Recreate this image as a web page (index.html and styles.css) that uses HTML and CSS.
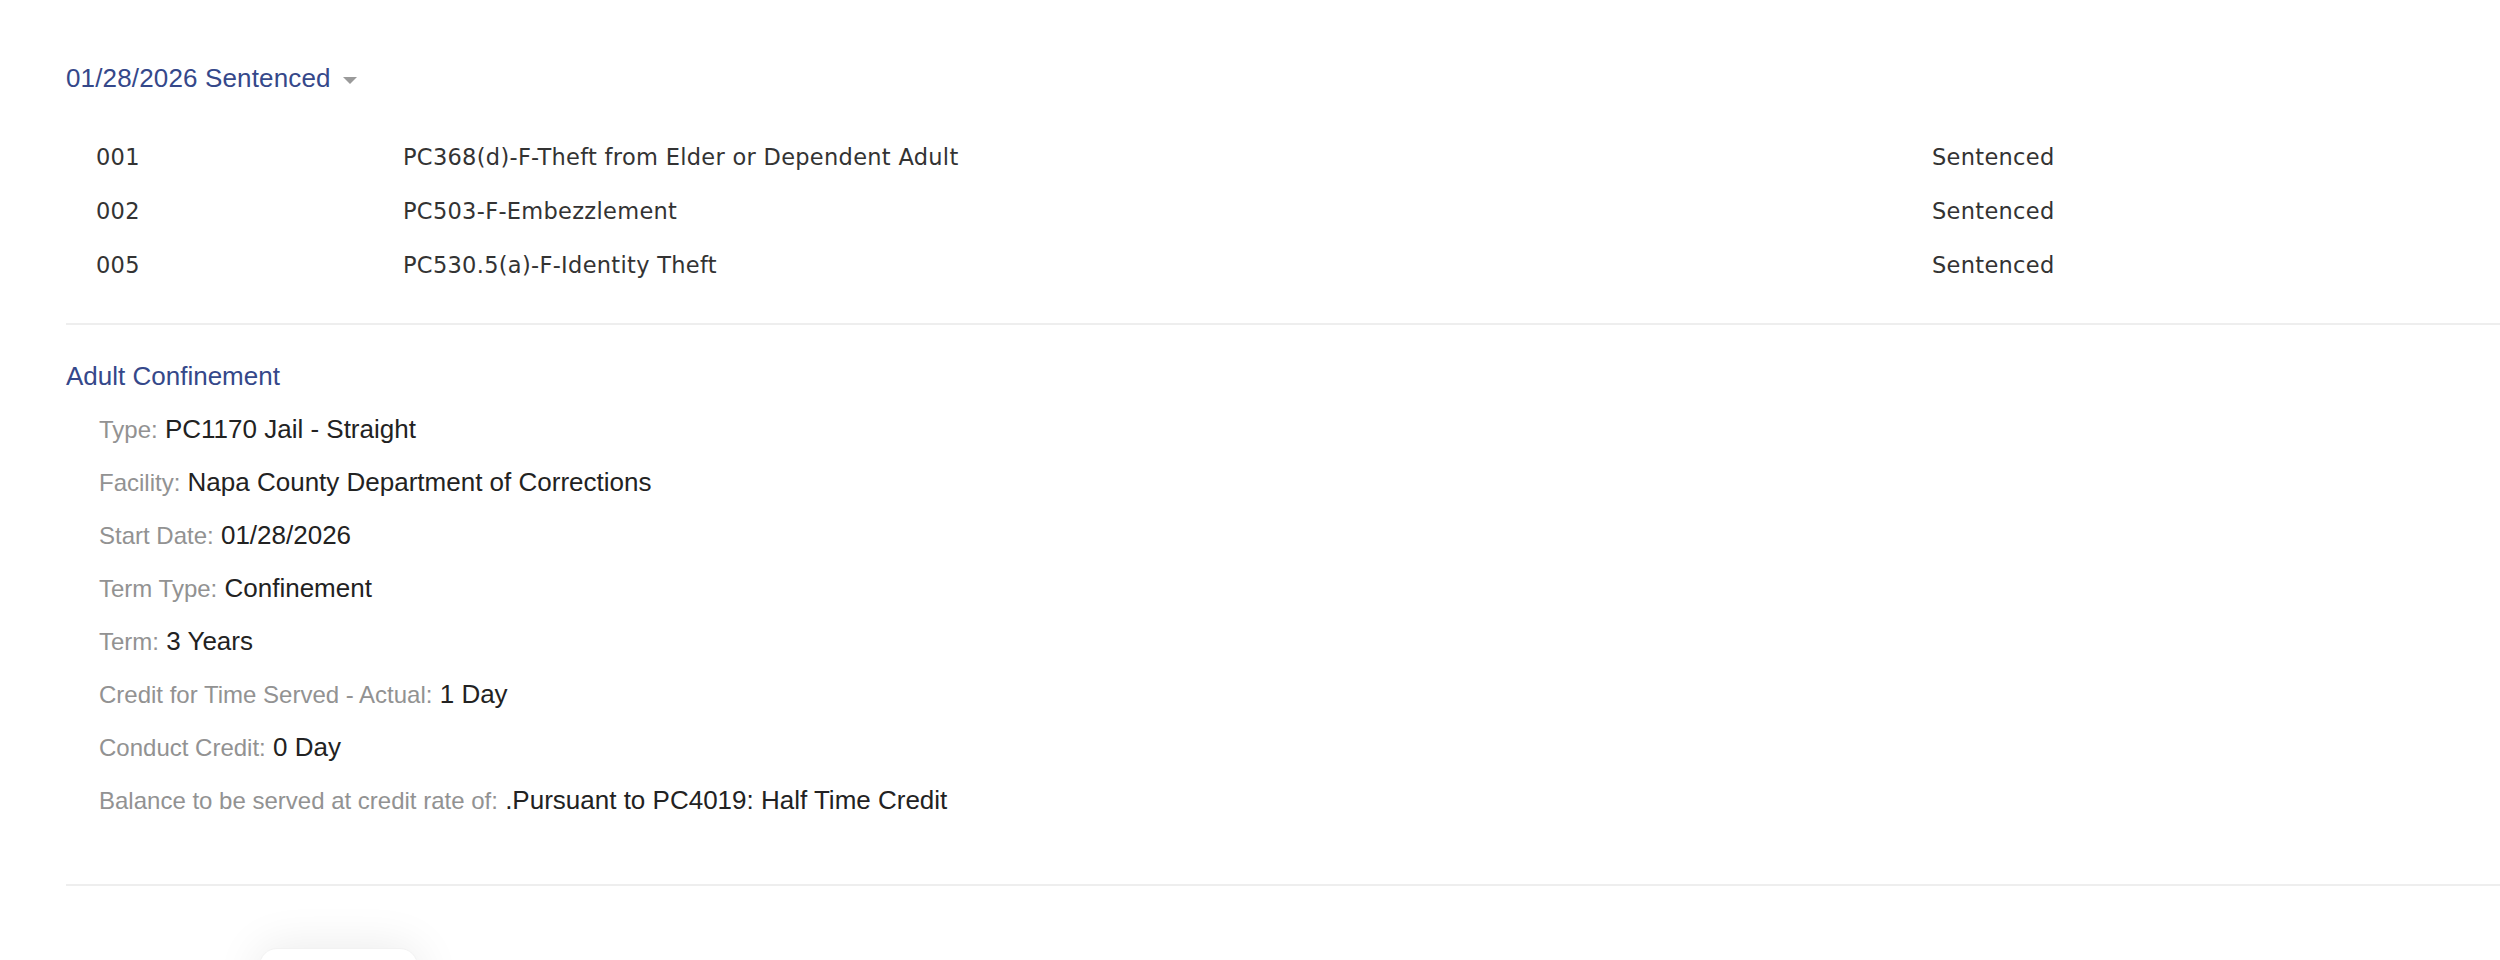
FILE: index.html
```html
<!DOCTYPE html>
<html lang="en">
<head>
<meta charset="utf-8">
<title>Sentence Detail</title>
<link rel="stylesheet" href="styles.css">
</head>
<body>
<main class="page">
  <section class="sentence">
    <h2 class="section-title">01/28/2026 Sentenced<svg class="caret" width="14" height="8" viewBox="0 0 14 8" aria-hidden="true"><polygon points="0,0 14,0 7,7" fill="#9a9a9a"/></svg></h2>
    <div class="charges">
      <div class="charge-row"><span class="c-num">001</span><span class="c-desc">PC368(d)-F-Theft from Elder or Dependent Adult</span><span class="c-status">Sentenced</span></div>
      <div class="charge-row"><span class="c-num">002</span><span class="c-desc">PC503-F-Embezzlement</span><span class="c-status">Sentenced</span></div>
      <div class="charge-row"><span class="c-num">005</span><span class="c-desc">PC530.5(a)-F-Identity Theft</span><span class="c-status">Sentenced</span></div>
    </div>
  </section>
  <section class="confinement">
    <h3 class="sub-title">Adult Confinement</h3>
    <div class="fields">
      <div class="field"><span class="label">Type:</span> PC1170 Jail - Straight</div>
      <div class="field"><span class="label">Facility:</span> Napa County Department of Corrections</div>
      <div class="field"><span class="label">Start Date:</span> 01/28/2026</div>
      <div class="field"><span class="label">Term Type:</span> Confinement</div>
      <div class="field"><span class="label">Term:</span> 3 Years</div>
      <div class="field"><span class="label">Credit for Time Served - Actual:</span> 1 Day</div>
      <div class="field"><span class="label">Conduct Credit:</span> 0 Day</div>
      <div class="field"><span class="label">Balance to be served at credit rate of:</span> .Pursuant to PC4019: Half Time Credit</div>
    </div>
  </section>
  <div class="end-rule"></div>
</main>
<div class="floating-card"></div>
</body>
</html>
```

FILE: styles.css
```css
html, body {
  margin: 0;
  padding: 0;
  background: #ffffff;
  overflow: hidden;
}

body {
  width: 2500px;
  height: 960px;
  position: relative;
  font-family: "Liberation Sans", Arial, Helvetica, sans-serif;
  color: #222222;
}

.page {
  padding: 58px 0 0 66px;
}

.section-title {
  margin: 0;
  font-size: 26px;
  line-height: 40px;
  font-weight: normal;
  letter-spacing: 0.15px;
  color: #35488a;
  display: flex;
  align-items: center;
}

.caret {
  margin-left: 12px;
  margin-top: 5px;
}

.charges {
  margin-top: 32px;
  font-family: "DejaVu Sans", Verdana, sans-serif;
  font-size: 22.5px;
  letter-spacing: 0.3px;
  color: #333333;
}

.charge-row {
  display: grid;
  grid-template-columns: 307px 1529px 1fr;
  height: 54px;
  line-height: 54px;
  padding-left: 30px;
}

.sentence {
  padding-bottom: 31px;
  border-bottom: 2px solid #eeeeee;
}

.confinement {
  padding-top: 31px;
}

.sub-title {
  margin: 0 0 7px 0;
  font-size: 26px;
  line-height: 40px;
  font-weight: normal;
  color: #35488a;
}

.fields {
  padding-left: 33px;
}

.field {
  font-size: 26px;
  line-height: 53px;
  height: 53px;
  color: #222222;
  white-space: nowrap;
}

.label {
  font-size: 24px;
  line-height: 1;
  color: #929292;
}

.end-rule {
  margin-top: 57px;
  border-top: 2px solid #eeeeee;
}

.floating-card {
  position: absolute;
  left: 259px;
  top: 948px;
  width: 157px;
  height: 60px;
  border-radius: 18px;
  background: #ffffff;
  border: 1px solid #f2f2f2;
  box-shadow: 0 0 48px rgba(0, 0, 0, 0.09);
}
```
